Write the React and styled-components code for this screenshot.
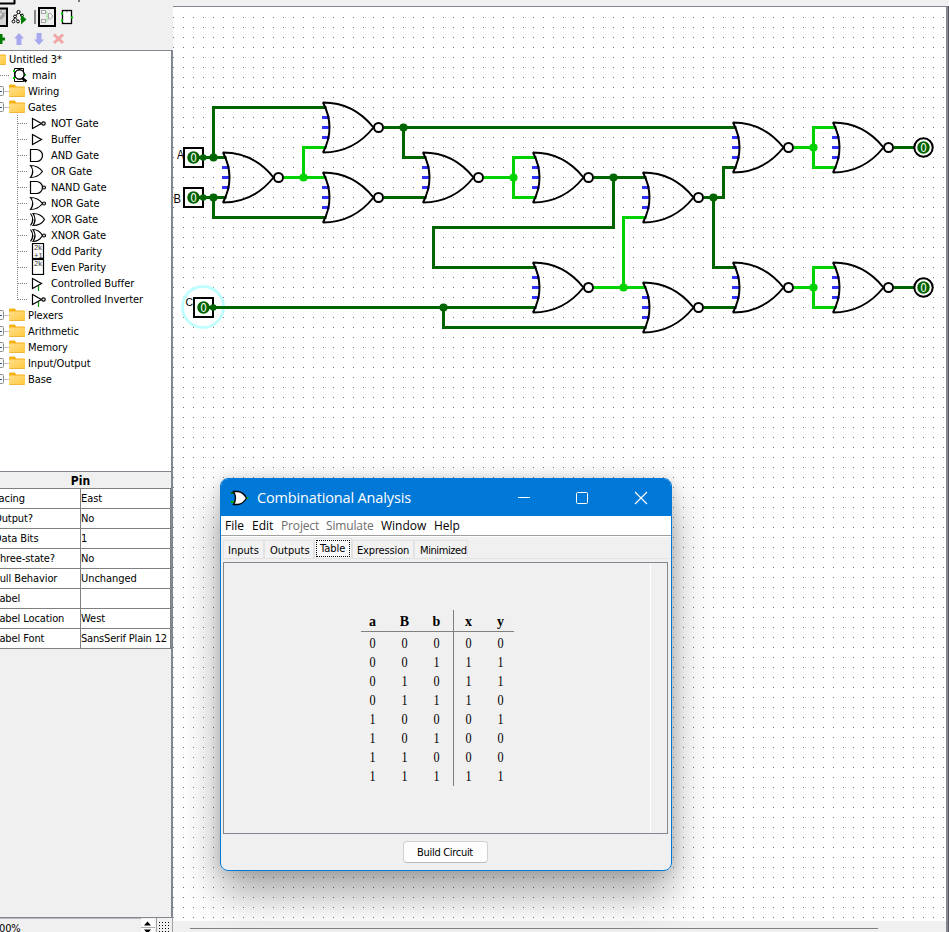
import React from "react";
import styled, { createGlobalStyle } from "styled-components";

const UI = '"DejaVu Sans Condensed", "DejaVu Sans", sans-serif';
const SEGOE = '"Open Sans", "Noto Sans", sans-serif';
const DARK = "#006400";
const LIVE = "#00d200";

const Global = createGlobalStyle`
  * { box-sizing: border-box; }
  body { margin: 0; background: #f0f0f0; overflow: hidden; }
`;

const Frame = styled.div`
  position: relative;
  display: flex;
  width: 949px;
  height: 932px;
  overflow: hidden;
  background: #f0f0f0;
  color: #000;
  font: 11px/16px ${UI};
  white-space: nowrap;
`;

/* ---------- left column ---------- */
const Sidebar = styled.aside`
  display: flex;
  flex-direction: column;
  width: 173px;
  flex: none;
  overflow: hidden;
`;
const Upper = styled.div`
  display: flex;
  flex-direction: column;
  height: 917px;
  flex: none;
`;
const Toolbars = styled.div`
  height: 50px;
  svg { display: block; }
`;
const Tree = styled.div`
  height: 421px;
  border-top: 1px solid #828790;
  border-right: 2px solid #828790;
  background: #fff;
`;
const TreeRow = styled.div`
  display: flex;
  height: 16px;
`;
const TreeIcon = styled.div`
  width: ${(p) => p.$w}px;
  height: 16px;
  flex: none;
  svg { display: block; }
`;
const TreeText = styled.span`
  line-height: 18px;
  letter-spacing: -0.06px;
`;
const Attributes = styled.div`
  display: flex;
  flex-direction: column;
  flex: 1;
  border-right: 2px solid #828790;
`;
const AttrTitle = styled.div`
  height: 17px;
  border-top: 1px solid #828790;
  padding-right: 10px;
  text-align: center;
  font-weight: bold;
  font-size: 12px;
  line-height: 18px;
`;
const AttrRow = styled.div`
  display: grid;
  grid-template-columns: 80px 91px;
  height: 20px;
  border-top: 1px solid #808080;
  background: #fff;
  line-height: 19px;
  &:last-child { height: 21px; border-bottom: 1px solid #808080; }
`;
const AttrName = styled.div`
  overflow: hidden;
  text-indent: -6px;
  letter-spacing: -0.1px;
`;
const AttrValue = styled.div`
  border-left: 1px solid #808080;
  border-right: 1px solid #808080;
  overflow: hidden;
  letter-spacing: ${(p) => (p.$tight ? -0.18 : -0.05)}px;
`;
const ZoomBar = styled.div`
  display: flex;
  flex: 1;
  border-top: 1px solid #828790;
  border-right: 1px solid #a0a0a0;
`;
const ZoomValue = styled.div`
  width: 141px;
  border-top: 1px solid #b8b8bc;
  text-indent: -7px;
  line-height: 19px;
  letter-spacing: -0.2px;
`;

/* ---------- canvas ---------- */
const Main = styled.main`
  display: flex;
  flex-direction: column;
  width: 776px;
  background: linear-gradient(to right, transparent 773px, #828790 773px, #828790 775px, #5a5a5e 775px) 0 6px no-repeat;
`;
const CanvasArea = styled.div`
  width: 773px;
  height: 915px;
  margin-top: 6px;
  border-top: 1px solid #828790;
  background: #fff;
  overflow: hidden;
  svg { display: block; }
`;
const ScrollBar = styled.div`
  flex: 1;
  padding: 7px 0 0 17px;
`;
const ScrollThumb = styled.div`
  width: 688px;
  height: 1px;
  background: #808080;
`;

/* ---------- dialog ---------- */
const Dialog = styled.section`
  position: absolute;
  left: 220px;
  top: 478px;
  width: 452px;
  height: 393px;
  display: flex;
  flex-direction: column;
  border: 1px solid #0078d7;
  border-radius: 8px;
  overflow: hidden;
  background: #f0f0f0;
`;
const DialogShadow = styled.div`
  position: absolute;
  left: 220px;
  top: 478px;
  width: 452px;
  height: 393px;
  border-radius: 8px;
  box-shadow: 0 22px 42px rgba(0, 0, 0, 0.36), 0 0 14px rgba(0, 0, 0, 0.14);
`;
const TitleBar = styled.header`
  display: flex;
  align-items: center;
  height: 37px;
  flex: none;
  padding-left: 9px;
  background: #0078d7;
  color: #fff;
  svg { display: block; }
`;
const Title = styled.h1`
  width: 255px;
  margin: 0 0 0 8px;
  font: 14.5px/20px ${SEGOE};
  letter-spacing: -0.15px;
`;
const Controls = styled.div`
  display: flex;
  margin-left: 4px;
  gap: 42.5px;
`;
const MenuBar = styled.nav`
  display: grid;
  grid-template-columns: 27px 29px 45px 55px 53px 40px;
  height: 20px;
  flex: none;
  padding-left: 4px;
  border-bottom: 1px solid #a0a0a0;
  background: #fff;
  font: 12px/20px ${SEGOE};
`;
const MenuItem = styled.span`
  color: ${(p) => (p.$off ? "#6d6d6d" : "#000")};
  letter-spacing: ${(p) => (p.$off ? -0.15 : 0)}px;
`;
const Tabs = styled.div`
  display: flex;
  align-items: flex-end;
  height: 22px;
  flex: none;
  border-top: 1px solid #fff;
  padding-left: 2px;
`;
const Tab = styled.div`
  width: ${(p) => p.$w}px;
  height: ${(p) => (p.$on ? 20 : 18)}px;
  padding: ${(p) => (p.$on ? "1px 1px" : `2px 0 0 ${p.$pl || 4}px`)};
  border: 1px solid #e2e2e2;
  border-bottom: 0;
  background: ${(p) => (p.$on ? "#f9f9f9" : "#f2f2f2")};
  line-height: 15px;
  letter-spacing: ${(p) => p.$ls || 0}px;
`;
const Focus = styled.div`
  height: 17px;
  border: 1px dotted #000;
  padding-left: 3px;
  line-height: 15px;
`;
const Pane = styled.div`
  display: flex;
  height: 275px;
  flex: none;
  margin: 0 2px;
  padding: 3px 0 0;
  border-top: 1px solid #e2e2e2;
  border-bottom: 1px solid #e2e2e2;
`;
const Scroll = styled.div`
  width: 445px;
  height: 272px;
  padding: 47px 17px 0 137px;
  border: 1px solid #828790;
  background: linear-gradient(to right, transparent 426px, #fff 426px, #fff 427px, transparent 427px) #f0f0f0;
`;
const Truth = styled.div`
  display: grid;
  grid-template-columns: 92px 61px;
  width: 153px;
  height: 176px;
`;
const Half = styled.div`
  display: grid;
  grid-template-columns: repeat(${(p) => p.$n}, 32px);
  grid-template-rows: 21px;
  grid-auto-rows: 19px;
  ${(p) => (p.$n === 3 ? "border-right: 1px solid #808080; margin-right: -1px;" : "")}
`;
const Head = styled.div`
  height: 22px;
  margin-right: ${(p) => p.$trim || 0}px;
  padding-right: ${(p) => p.$pad || 0}px;
  padding-left: ${(p) => (p.$trim ? 2 : 0)}px;
  border-bottom: 1px solid #808080;
  font: bold 14px/23px "Liberation Serif", serif;
  text-align: center;
`;
const Bit = styled.div`
  display: flex;
  justify-content: center;
  padding-right: ${(p) => p.$pad}px;
  font: 14.5px/24px "Liberation Serif", serif;
  span { display: block; transform: scaleX(0.84); }
`;
const Footer = styled.footer`
  display: flex;
  justify-content: center;
  padding-top: 8px;
`;
const Button = styled.button`
  width: 85px;
  height: 22px;
  margin-right: 2px;
  padding: 2px 0 0;
  border: 1px solid #d0d0d0;
  border-bottom-color: #bcbcbc;
  border-radius: 4px;
  background: #fdfdfd;
  color: #000;
  font: 11px/16px ${UI};
  letter-spacing: -0.3px;
`;

/* ---------- tree icons ---------- */
const Folder = ({ x = 9 }) => (
  <g>
    <path d={`M${x} 3q0-1.500 1-1.500h4.500l2 2h7.500q1 0 1 1v3h-16z`} fill="#f5b014" />
    <rect x={x} y="4.500" width="16" height="9.500" rx="1" fill="url(#fold)" />
    <path d={`M${x + 0.5} 13.5h15`} stroke="#eeb73a" />
  </g>
);
const FolderRow = () => (
  <svg width="28" height="16">
    <defs>
      <linearGradient id="fold" x1="0" y1="0" x2="1" y2="1">
        <stop offset="0" stopColor="#ffe08a" />
        <stop offset="1" stopColor="#ffc83d" />
      </linearGradient>
    </defs>
    <rect x="-5.500" y="3.500" width="9" height="9" rx="1" fill="#fafafa" stroke="#919191" />
    <path d="M-3 8.500h5" stroke="#3c5a9a" />
    <path d="M4.500 8.500h5" stroke="#808080" strokeDasharray="1 1" />
    <Folder />
  </svg>
);

const shapes = {
  not: <><path d="M32.500 3.500v10l9-5z" /><circle cx="43.500" cy="8.500" r="1.700" /></>,
  buf: <path d="M32.500 3.500v10l9-5z" />,
  and: <path d="M30.500 2.500h6a6 6 0 0 1 0 12h-6z" />,
  or: <path d="M30.500 2.500Q38 2.500 42.500 8.500Q38 14.500 30.500 14.500Q35 8.500 30.500 2.500Z" />,
  nand: <><path d="M30.500 2.500h6a6 6 0 0 1 0 12h-6z" /><circle cx="44" cy="8.500" r="1.500" /></>,
  nor: <><path d="M30.500 2.500Q38 2.500 42.500 8.500Q38 14.500 30.500 14.500Q35 8.500 30.500 2.500Z" /><circle cx="44" cy="8.500" r="1.500" /></>,
  xor: <><path d="M33 2.500Q41 2.500 44.500 8.500Q41 14.500 33 14.500Q37 8.500 33 2.500Z" /><path d="M30.500 2.500q4.500 6 0 12" fill="none" /></>,
  xnor: <><path d="M33 2.500Q39 2.500 42.500 8.500Q39 14.500 33 14.500Q37 8.500 33 2.500Z" /><path d="M30.500 2.500q4.500 6 0 12" fill="none" /><circle cx="44" cy="8.500" r="1.500" /></>,
  odd: <><rect x="32.500" y="0.500" width="11" height="15" /><g fontFamily="Liberation Sans, sans-serif" fontSize="7.500" fill="#333" stroke="none"><text x="34" y="7">2k</text><text x="34" y="14.500">+1</text></g></>,
  even: <><rect x="32.500" y="0.500" width="11" height="15" /><text x="34" y="7" fontFamily="Liberation Sans, sans-serif" fontSize="7.500" fill="#333" stroke="none">2k</text></>,
  cbuf: <><path d="M38.500 11v5" stroke="#009600" /><path d="M32.500 3.500v10l9-5z" /></>,
  cinv: <><path d="M38.500 11v5" stroke="#009600" /><path d="M32.500 3.500v10l9-5z" /><circle cx="43.500" cy="8.500" r="1.700" /></>,
};
const GateIcon = ({ kind, last }) => (
  <svg width="51" height="16">
    <path d={`M17.500 0v${last ? 9 : 16}M18 8.500h9`} stroke="#808080" strokeDasharray="1 1" fill="none" />
    <g fill="#fff" stroke="#000" strokeWidth="1.200">{shapes[kind]}</g>
  </svg>
);

const gates = [
  ["not", "NOT Gate"], ["buf", "Buffer"], ["and", "AND Gate"], ["or", "OR Gate"],
  ["nand", "NAND Gate"], ["nor", "NOR Gate"], ["xor", "XOR Gate"], ["xnor", "XNOR Gate"],
  ["odd", "Odd Parity"], ["even", "Even Parity"], ["cbuf", "Controlled Buffer"], ["cinv", "Controlled Inverter"],
];
const FolderItem = ({ name }) => (
  <TreeRow><TreeIcon $w={28}><FolderRow /></TreeIcon><TreeText>{name}</TreeText></TreeRow>
);

const attributes = [
  ["Facing", "East"], ["Output?", "No"], ["Data Bits", "1"], ["Three-state?", "No"],
  ["Pull Behavior", "Unchanged"], ["Label", ""], ["Label Location", "West"], ["Label Font", "SansSerif Plain 12"],
];

const ToolIcons = () => (
  <svg width="173" height="50" fill="none">
    <path d="M0 3.500h15M14.500 0v4" stroke="#000" strokeWidth="2" />
    <path d="M79 0v2" stroke="#777" strokeWidth="2" />
    <path d="M0 8.500h7V26H0" stroke="#000" strokeWidth="2" fill="#d4d4d4" />
    <path d="M0 19l4-4.500" stroke="#a0a0a0" strokeWidth="3" />
    <path d="M1 10.500a2.500 2.500 0 0 0 4.500 2" stroke="#a0a0a0" strokeWidth="1.500" />
    <path d="M18 13l-3 4-2 4M19 13l3 3M15 17l3 4M22 16l-1 4" stroke="#000" />
    <g fill="#fff" stroke="#000">
      <circle cx="18.500" cy="12" r="1.600" /><circle cx="15" cy="16.500" r="1.400" /><circle cx="22" cy="15.500" r="1.400" />
      <circle cx="13.500" cy="21.500" r="1.400" /><circle cx="18" cy="21.500" r="1.400" />
    </g>
    <path d="M21 14.500l5.500 5-5.500 5z" fill="#007d00" />
    <path d="M35 10v14" stroke="#888" strokeWidth="2" />
    <rect x="39" y="8" width="16" height="18" stroke="#000" strokeWidth="2" fill="#eee" />
    <path d="M45 12h2v9h-2M47 16.500h3" stroke="#9be29b" />
    <g stroke="#a5a5a5" fill="#f4f4f4">
      <rect x="41.500" y="10.500" width="4" height="3" /><rect x="41.500" y="19.500" width="4" height="3" />
      <path d="M48.500 13.500h2l2.500 2.500-2.500 3h-2z" />
    </g>
    <rect x="62.500" y="10.500" width="9" height="13" stroke="#000" strokeWidth="1.300" fill="#fff" />
    <path d="M65.500 11q1.500 2.500 3 0" stroke="#999" />
    <path d="M61 13.500h2M61 20.500h2M71 17.500h2" stroke="#00d200" strokeWidth="2" />
    <path d="M0 39h5M1 34v10" stroke="#007d00" strokeWidth="3" />
    <path d="M19 33l5 5.500h-2.500V45h-5v-6.500h-2.500z" fill="#a8a8ee" />
    <path d="M39 45l5-5.500h-2.500V33h-5v6.500h-2.500z" fill="#a8a8ee" />
    <path d="M54 34.500l9 8.500M63 34.500l-9 8.500" stroke="#f0a6a6" strokeWidth="3" />
  </svg>
);

/* ---------- circuit ---------- */
const norGates = [
  [223, 177], [323, 127], [323, 197], [423, 177], [533, 177], [643, 197],
  [533, 287], [643, 307], [733, 147], [833, 147], [733, 287], [833, 287],
];
const darkWires =
  "M203 157H226M213 158.500V107H326M203 197H226M213 195.500V217H326M383 127H736M403 127V157H426M383 197H426" +
  "M593 177H646M613 177V227H433V267H536M213 307H536M443 307V327H646M703 197H723V167H736M713 197V267H736" +
  "M703 307H736M893 147H914M893 287H914";
const liveWires =
  "M283 177H326M303 177V147H326M483 177H513M536 157H513V197H536M593 287H646M623 287V217H646" +
  "M793 147H813M836 127H813V167H836M793 287H813M836 267H813V307H836";
const darkJoints = [[213, 157], [213, 197], [403, 127], [613, 177], [443, 307], [713, 197]];
const liveJoints = [[303, 177], [513, 177], [623, 287], [813, 147], [813, 287]];

const Nor = ({ x, y }) => (
  <g transform={`translate(${x} ${y})`} fill="none" strokeWidth="2">
    <path d="M-1.500 -10H6M-1.500 0H6M-1.500 10H6" stroke="#3232ff" strokeWidth="3" />
    <path d="M50 0Q30 -25 -0.500 -25Q12.500 0 -0.500 25Q30 25 50 0Z" stroke="#000" strokeLinejoin="bevel" />
    <circle cx="55" cy="0" r="4.500" stroke="#000" />
  </g>
);
const Value = ({ x, y }) => (
  <g>
    <circle cx={x} cy={y} r="6.200" fill={DARK} />
    <text x={x} y={y + 4} textAnchor="middle" fontFamily="DejaVu Sans Condensed, sans-serif" fontSize="11.500" fill="#fff">0</text>
  </g>
);
const InputPin = ({ x, y }) => (
  <g>
    <rect x={x - 9.5} y={y - 9.5} width="19" height="19" fill="#fff" stroke="#000" strokeWidth="2" />
    <path d={`M${x + 5} ${y}h6`} stroke={DARK} strokeWidth="3" />
    <circle cx={x + 9.7} cy={y} r="3.300" fill={DARK} />
    <Value x={x} y={y} />
  </g>
);
const OutputPin = ({ x, y }) => (
  <g>
    <circle cx={x} cy={y} r="9.200" fill="#fff" stroke="#000" strokeWidth="2" />
    <Value x={x} y={y} />
  </g>
);
const Circuit = () => (
  <svg width="773" height="914" viewBox="173 7 773 914">
    <defs>
      <pattern id="dots" x="173" y="7" width="10" height="10" patternUnits="userSpaceOnUse">
        <rect width="1" height="1" fill="#777" />
      </pattern>
    </defs>
    <rect x="173" y="8" width="773" height="913" fill="url(#dots)" />
    <g transform="translate(.5 .5)">
      <circle cx="202.500" cy="306.500" r="20.500" fill="none" stroke="#c0ffff" strokeWidth="2.800" />
      <g fill="none" strokeWidth="3">
        <path d={darkWires} stroke={DARK} />
        <path d={liveWires} stroke={LIVE} />
      </g>
      {darkJoints.map(([x, y]) => <circle key={`${x}-${y}`} cx={x} cy={y} r="4.100" fill={DARK} />)}
      {liveJoints.map(([x, y]) => <circle key={`${x}-${y}`} cx={x} cy={y} r="4.100" fill={LIVE} />)}
      {norGates.map(([x, y]) => <Nor key={`${x}-${y}`} x={x} y={y} />)}
      <InputPin x={193} y={157} />
      <InputPin x={193} y={197} />
      <InputPin x={203} y={307} />
      <OutputPin x={923} y={147} />
      <OutputPin x={923} y={287} />
    </g>
    <g fontFamily="Liberation Sans, sans-serif" fontSize="12">
      <text x="177" y="159" textLength="7" lengthAdjust="spacingAndGlyphs">A</text>
      <text x="173.500" y="203" textLength="7.500" lengthAdjust="spacingAndGlyphs">B</text>
      <text x="185.500" y="305.500" fontSize="11" textLength="7.500" lengthAdjust="spacingAndGlyphs">C</text>
    </g>
  </svg>
);

/* ---------- truth table ---------- */
const truth = ["00000", "00111", "01011", "01110", "10001", "10100", "11000", "11111"];

const bits = (from, to, pad) =>
  truth.flatMap((row, i) =>
    row.slice(from, to).split("").map((b, j) => <Bit key={`${i}${j}`} $pad={pad}><span>{b}</span></Bit>)
  );

const TruthTable = () => (
  <Truth>
    <Half $n={3}>
      {["a", "B", "b"].map((h) => <Head key={h} $pad={9}>{h}</Head>)}
      {bits(0, 3, 9)}
    </Half>
    <Half $n={2}>
      <Head $pad={1}>x</Head>
      <Head $trim={3}>y</Head>
      {bits(3, 5, 1)}
    </Half>
  </Truth>
);

export default function App() {
  return (
    <Frame>
      <Global />
      <Sidebar>
        <Upper>
          <Toolbars><ToolIcons /></Toolbars>
          <Tree>
            <TreeRow>
              <TreeIcon $w={9}><svg width="9" height="16"><Folder x={-10} /></svg></TreeIcon>
              <TreeText>Untitled 3*</TreeText>
            </TreeRow>
            <TreeRow>
              <TreeIcon $w={32}>
                <svg width="32" height="16" fill="none">
                  <path d="M0 8.500h10" stroke="#808080" strokeDasharray="1 1" />
                  <path d="M14.500 1.500h9v13h-9z" stroke="#000" fill="#fff" />
                  <path d="M13 4h2M13 11h2M24 8h2" stroke={LIVE} strokeWidth="2" />
                  <circle cx="19.500" cy="7.500" r="4.700" fill="#fff" stroke="#000" strokeWidth="1.500" />
                  <path d="M22 11l4.500 3.500" stroke="#000" strokeWidth="2.500" />
                </svg>
              </TreeIcon>
              <TreeText>main</TreeText>
            </TreeRow>
            <FolderItem name="Wiring" />
            <FolderItem name="Gates" />
            {gates.map(([kind, name], i) => (
              <TreeRow key={kind}>
                <TreeIcon $w={51}><GateIcon kind={kind} last={i === gates.length - 1} /></TreeIcon>
                <TreeText>{name}</TreeText>
              </TreeRow>
            ))}
            {["Plexers", "Arithmetic", "Memory", "Input/Output", "Base"].map((n) => <FolderItem key={n} name={n} />)}
          </Tree>
          <Attributes>
            <AttrTitle>Pin</AttrTitle>
            {attributes.map(([name, value]) => (
              <AttrRow key={name}>
                <AttrName>{name}</AttrName>
                <AttrValue $tight={value.length > 12}>{value}</AttrValue>
              </AttrRow>
            ))}
          </Attributes>
        </Upper>
        <ZoomBar>
          <ZoomValue>100%</ZoomValue>
          <svg width="31" height="14">
            <path d="M-.5 1v13M15.500 0v14" stroke="#a0a0a0" />
            <rect x="0" y="1" width="14" height="13" fill="#fcfcfc" />
            <path d="M0 9.500h14" stroke="#b0b0b0" />
            <path d="M3 7.500l3.500-4 3.500 4zM3 11.500h7l-3.500 4z" />
            {[4, 7, 10, 13].flatMap((y) => [18, 21, 24, 27].map((x) => <rect key={`${x}-${y}`} x={x} y={y} width="1" height="1" />))}
          </svg>
        </ZoomBar>
      </Sidebar>

      <Main>
        <CanvasArea><Circuit /></CanvasArea>
        <ScrollBar><ScrollThumb /></ScrollBar>
      </Main>

      <DialogShadow />
      <Dialog>
        <TitleBar>
          <svg width="19" height="18" fill="none">
            <path d="M1 13h4M15 9h3.500" stroke="#00b400" strokeWidth="2" />
            <path d="M1 4h4" stroke="#005a00" strokeWidth="2" />
            <path d="M3.500 2.500H8Q13 3 16.500 9Q13 15 8 15.500H3.500Q7.500 9 3.500 2.500Z" fill="#fff" stroke="#000" strokeWidth="1.300" />
          </svg>
          <Title>Combinational Analysis</Title>
          <Controls>
            <svg width="16" height="14"><path d="M2 6.500h12" stroke="#fff" /></svg>
            <svg width="16" height="14"><rect x="1.500" y="1.500" width="11" height="11" rx="1" fill="none" stroke="#fff" /></svg>
            <svg width="16" height="14"><path d="M2 1l12 12M14 1L2 13" stroke="#fff" strokeWidth="1.100" /></svg>
          </Controls>
        </TitleBar>
        <MenuBar>
          <MenuItem>File</MenuItem>
          <MenuItem>Edit</MenuItem>
          <MenuItem $off>Project</MenuItem>
          <MenuItem $off>Simulate</MenuItem>
          <MenuItem>Window</MenuItem>
          <MenuItem>Help</MenuItem>
        </MenuBar>
        <Tabs>
          <Tab $w={41}>Inputs</Tab>
          <Tab $w={50} $pl={5}>Outputs</Tab>
          <Tab $w={38} $on><Focus>Table</Focus></Tab>
          <Tab $w={62} $ls={-0.15}>Expression</Tab>
          <Tab $w={54} $pl={5} $ls={-0.4}>Minimized</Tab>
        </Tabs>
        <Pane><Scroll><TruthTable /></Scroll></Pane>
        <Footer><Button>Build Circuit</Button></Footer>
      </Dialog>
    </Frame>
  );
}
